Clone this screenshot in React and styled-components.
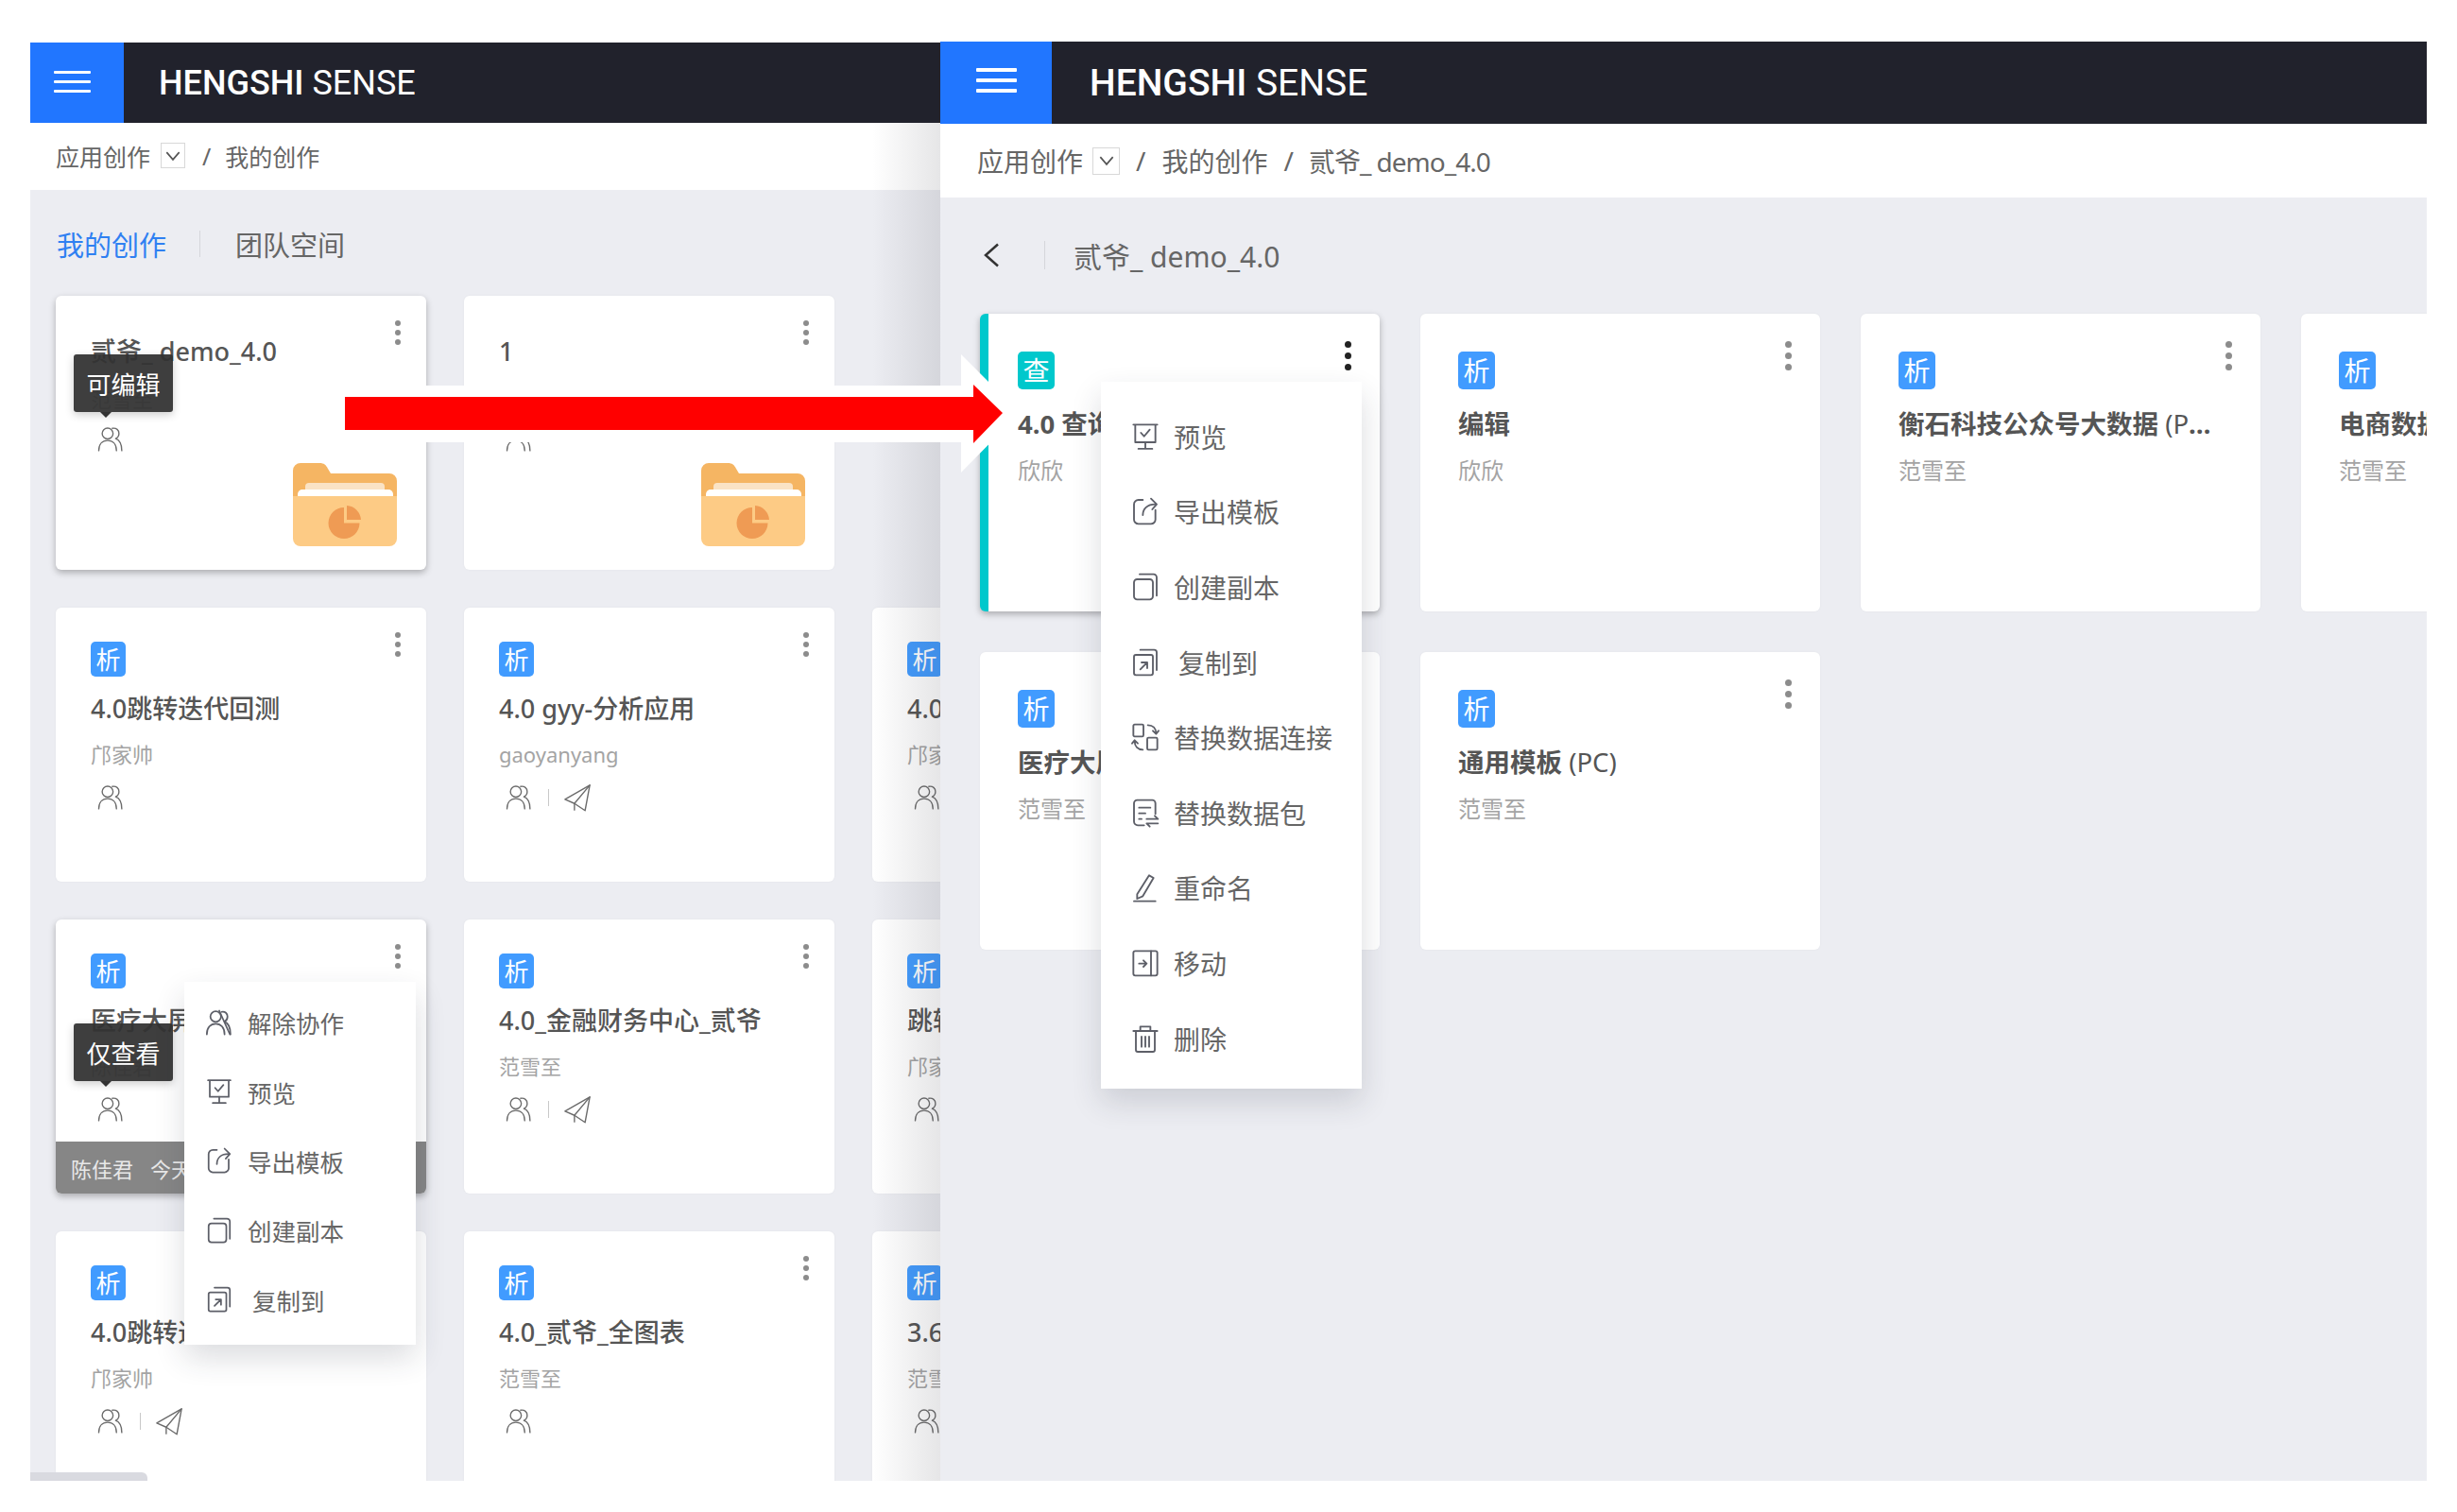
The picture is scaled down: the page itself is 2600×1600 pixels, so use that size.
import React from "react";
import styled, { createGlobalStyle } from "styled-components";

const GlobalStyle = createGlobalStyle`
  html, body { margin: 0; padding: 0; background: #fff; }
  * { box-sizing: border-box; }
  body { font-family: "Noto Sans", "Noto Sans CJK SC", sans-serif; color: #555; }
`;

const Stroke = ({ size = 26, color = "#5d5f68", sw = 1.4, children }) => (
  <svg width={size} height={size} viewBox="0 0 24 24" fill="none" stroke={color} strokeWidth={sw} strokeLinecap="round" strokeLinejoin="round">
    {children}
  </svg>
);

const icons = {
  users: (
    <>
      <circle cx="9.5" cy="7" r="4.6" />
      <path d="M2 21.5c0-5.5 3-8.6 7.5-8.6s7.5 3.1 7.5 8.6" />
      <path d="M13.5 2.6c3.4-.6 5.6 1.500 5.600 4.300 0 2-1 3.500-2.800 4.400 3.200 1.200 5.200 4.600 5.200 10.200" />
    </>
  ),
  unlink: (
    <>
      <circle cx="9" cy="7" r="4.500" />
      <path d="M1.500 22c0-5.500 3-9 7.500-9s7.500 3.500 7.500 9" />
      <path d="M14 3c3-.6 5 1.400 5 4 0 2-1 3.500-2.500 4.300 3 1.200 5 4.700 5 10.700" />
      <path d="M12 2l9 20" />
    </>
  ),
  preview: (
    <>
      <path d="M2.500 2.500h19M4 2.500v14h16v-14" />
      <path d="M8.500 9l2.500 2.800L15.500 6.500" />
      <path d="M12 16.500v5M6.500 21.700h11" />
    </>
  ),
  exportTpl: (
    <>
      <path d="M10 3H6.500A3.500 3.500 0 0 0 3 6.500v12A3.500 3.500 0 0 0 6.500 22h10a3.500 3.500 0 0 0 3.500-3.500V11" />
      <path d="M10 15c0-5 3.500-8.500 10-8.500" />
      <path d="M16.500 2l4.500 4.500-3.500 4" />
    </>
  ),
  copy: (
    <>
      <rect x="3" y="6" width="15" height="16" rx="2.500" />
      <path d="M7.500 2h11A2.500 2.500 0 0 1 21 4.500V19" />
    </>
  ),
  copyTo: (
    <>
      <rect x="3" y="6" width="15" height="16" rx="1.500" />
      <path d="M8 2h11a2 2 0 0 1 2 2v14" />
      <path d="M8 17.500l5-5M9 12h4.500v4.500" />
    </>
  ),
  swapLink: (
    <>
      <rect x="2.500" y="2" width="8" height="9.500" rx="1" />
      <rect x="13.500" y="12.500" width="8" height="9.500" rx="1" />
      <path d="M14 2.500c4 0 6.500 2.500 6.500 6.500M18 7l2.500 2.500L22.500 7" />
      <path d="M10 22c-4 0-6.500-2.500-6.500-7M1.500 17l2-2.500 2.500 2.500" />
    </>
  ),
  swapPack: (
    <>
      <path d="M11 22H6a3 3 0 0 1-3-3V4.500A2.500 2.500 0 0 1 5.500 2h12A2.500 2.500 0 0 1 20 4.500V13" />
      <path d="M7 8h9M7 12.500h5M7 17h2" />
      <path d="M13 17h9l-2.500-2.500M22 20.500h-9l2.500 2.500" />
    </>
  ),
  rename: (
    <>
      <path d="M5.500 17.500L15 2.500l3.500 2L10 19l-4.500 2z" />
      <path d="M3 23h17" />
    </>
  ),
  move: (
    <>
      <rect x="2.500" y="2.500" width="19" height="19.500" rx="1.500" />
      <path d="M16.500 2.500V22" />
      <path d="M7 12.500h5.500M10.500 10l2.500 2.500-2.500 2.500" />
    </>
  ),
  trash: (
    <>
      <path d="M2.500 6h19M8 6V2.500h8V6" />
      <path d="M4.500 6v15a1.500 1.500 0 0 0 1.500 1.500h12a1.500 1.500 0 0 0 1.500-1.500V6" />
      <path d="M9 10.500v8M12 10.500v8M15 10.500v8" />
    </>
  ),
  send: (
    <>
      <path d="M22.500 1.500L1.500 13.500l8 3.500 9 6z" />
      <path d="M22.500 1.500L9.500 17v5.500" />
    </>
  ),
};

const Folder = () => (
  <svg width="110" height="88" viewBox="0 0 110 88">
    <path d="M0 8a8 8 0 0 1 8-8h20c5 0 7 2 9 6l3 5h62a8 8 0 0 1 8 8v30H0z" fill="#f5b563" />
    <path d="M13 25a4 4 0 0 1 4-4h76a4 4 0 0 1 4 4v14H13z" fill="#fae3c5" />
    <path d="M5 33a5 5 0 0 1 5-5h91a5 5 0 0 1 5 5v8H5z" fill="#fff" />
    <path d="M0 35h110v45a8 8 0 0 1-8 8H8a8 8 0 0 1-8-8z" fill="#fdcb85" />
    <path d="M54 47a16.500 16.500 0 1 0 16.500 16.500H54z" fill="#ef9b54" />
    <path d="M57 45a16 16 0 0 1 15 15H57z" fill="#ef9b54" />
  </svg>
);

const Page = styled.div`
  position: relative;
  display: flex;
  width: 2600px;
  height: 1600px;
  padding: 45px 32px 33px;
  overflow: hidden;
  background: #fff;
`;

const Panel = styled.section`
  position: relative;
  flex: none;
  display: flex;
  flex-direction: column;
  overflow: hidden;
  background: #ecedf2;
  width: ${(p) => (p.$big ? "1573px" : "963px")};
  margin-top: ${(p) => (p.$big ? "-1px" : "0")};
  z-index: ${(p) => (p.$big ? 2 : 1)};
`;

const Shade = styled.div`
  position: absolute;
  top: 85px;
  right: 0;
  bottom: 0;
  width: 72px;
  z-index: 4;
  pointer-events: none;
  background: linear-gradient(to right, rgba(60, 60, 70, 0), rgba(60, 60, 70, 0.13));
`;

const TopBar = styled.header`
  flex: none;
  display: flex;
  align-items: center;
  background: #21222c;
  height: ${(p) => (p.$big ? "87px" : "85px")};
`;

const MenuButton = styled.div`
  flex: none;
  display: flex;
  flex-direction: column;
  justify-content: center;
  align-items: center;
  height: 100%;
  background: #2176ff;
  gap: ${(p) => (p.$big ? "7px" : "7px")};
  width: ${(p) => (p.$big ? "118px" : "99px")};
  padding-right: ${(p) => (p.$big ? "0" : "10px")};
  padding-bottom: ${(p) => (p.$big ? "6px" : "2px")};
`;

const MenuBar = styled.span`
  display: block;
  height: ${(p) => (p.$big ? "4px" : "3px")};
  border-radius: 1px;
  background: #fff;
  width: ${(p) => (p.$big ? "43px" : "39px")};
`;

const Brand = styled.div`
  font-family: Roboto, sans-serif;
  color: #fff;
  white-space: nowrap;
  font-size: ${(p) => (p.$big ? "39px" : "36px")};
  margin-left: ${(p) => (p.$big ? "40px" : "37px")};
  b { font-weight: 500; }
`;

const Crumbs = styled.nav`
  flex: none;
  display: flex;
  align-items: center;
  background: #fff;
  color: #666;
  white-space: nowrap;
  height: ${(p) => (p.$big ? "78px" : "71px")};
  padding-left: ${(p) => (p.$big ? "39px" : "27px")};
  padding-bottom: ${(p) => (p.$big ? "0" : "2px")};
  font-size: ${(p) => (p.$big ? "28px" : "25px")};
`;

const CrumbLast = styled.span`
  letter-spacing: -1px;
  margin-left: -1px;
`;

const DropBox = styled.span`
  display: inline-flex;
  align-items: center;
  justify-content: center;
  border: 1px solid #d8d8d8;
  margin-left: ${(p) => (p.$big ? "10px" : "11px")};
  width: ${(p) => (p.$big ? "29px" : "26px")};
  height: ${(p) => (p.$big ? "29px" : "27px")};
`;

const Slash = styled.span`
  margin: ${(p) => (p.$big ? "0 17px 0 17px" : "0 15px 0 18px")};
`;

const Content = styled.div`
  flex: 1;
  min-height: 0;
  padding: ${(p) => (p.$big ? "41px 0 0 42px" : "37px 0 0 27px")};
`;

const Tabs = styled.div`
  display: flex;
  align-items: center;
  height: 40px;
  font-size: 29px;
  color: #666;
  margin-bottom: 35px;
`;

const ActiveTab = styled.span`
  color: #2f80f2;
  margin-left: 1px;
`;

const TabLine = styled.span`
  width: 1px;
  height: 28px;
  background: #d5d6db;
  margin: 0 37px 0 35px;
`;

const BackRow = styled.div`
  display: flex;
  align-items: center;
  height: 40px;
  margin-bottom: 42px;
  font-size: 30px;
  color: #666;
  white-space: nowrap;
`;

const BackChevron = styled.svg`
  margin-left: 3px;
`;

const BackLine = styled.span`
  width: 1px;
  height: 30px;
  background: #d5d6db;
  margin: 0 30px 0 47px;
`;

const Grid = styled.div`
  display: grid;
  grid-template-columns: ${(p) => (p.$big ? "repeat(4, 423px)" : "repeat(3, 392px)")};
  grid-auto-rows: ${(p) => (p.$big ? "315px" : "290px")};
  gap: ${(p) => (p.$big ? "43px" : "40px")};
`;

const Card = styled.article`
  position: relative;
  display: flex;
  flex-direction: column;
  min-width: 0;
  border-radius: 6px;
  background: #fff;
  box-shadow: ${(p) => (p.$lifted ? "0 3px 7px rgba(0, 0, 0, 0.28)" : "0 0 3px rgba(0, 0, 0, 0.04)")};
  border-left: ${(p) => (p.$accent ? "9px solid #00c8cc" : "0")};
  padding: ${(p) => {
    if (p.$folder) return "42px 31px 0 37px";
    if (p.$big) return p.$accent ? "40px 50px 0 31px" : "40px 50px 0 40px";
    return "36px 31px 0 37px";
  }};
`;

const Dots = styled.div`
  position: absolute;
  display: flex;
  flex-direction: column;
  top: ${(p) => (p.$big ? "29px" : "26px")};
  right: ${(p) => (p.$big ? "30px" : "27px")};
  gap: ${(p) => (p.$big ? "5px" : "4px")};
  span {
    width: ${(p) => (p.$big ? "7px" : "6px")};
    height: ${(p) => (p.$big ? "7px" : "6px")};
    border-radius: 50%;
    background: ${(p) => (p.$dark ? "#222" : "#8c8c8c")};
  }
`;

const Badge = styled.div`
  flex: none;
  display: flex;
  align-items: center;
  justify-content: center;
  border-radius: 5px;
  color: #fff;
  background: ${(p) => (p.$teal ? "#00c8cc" : "#419bff")};
  width: ${(p) => (p.$big ? "39px" : "37px")};
  height: ${(p) => (p.$big ? "40px" : "37px")};
  font-size: ${(p) => (p.$big ? "28px" : "26px")};
  line-height: 1;
`;

const Title = styled.h3`
  margin: ${(p) => (p.$folder ? "-1px 0 0" : p.$big ? "19px 0 0" : "16px 0 0")};
  color: #555;
  overflow: hidden;
  white-space: nowrap;
  text-overflow: ellipsis;
  font-weight: ${(p) => (p.$big ? 700 : 500)};
  font-size: ${(p) => (p.$big ? "27.500px" : "27px")};
  line-height: 36px;
  span { font-weight: 400; }
`;

const Owner = styled.div`
  color: #a4a4a4;
  white-space: nowrap;
  line-height: 30px;
  font-size: ${(p) => (p.$big ? "24px" : "22px")};
  margin-top: ${(p) => (p.$big ? "16px" : p.$folder ? "17px" : "15px")};
`;

const Share = styled.div`
  display: flex;
  align-items: center;
  height: 24px;
  margin: ${(p) => (p.$folder ? "16px 0 0 6px" : "19px 0 0 6px")};
`;

const ShareLine = styled.span`
  width: 1px;
  height: 18px;
  background: #c8c8c8;
  margin: 0 15px 0 16px;
`;

const FolderSlot = styled.div`
  align-self: flex-end;
  margin-top: 13px;
  line-height: 0;
`;

const FootBar = styled.footer`
  position: absolute;
  left: 0;
  right: 0;
  bottom: 0;
  height: 55px;
  padding-left: 16px;
  display: flex;
  align-items: center;
  gap: 18px;
  color: #e8e8e8;
  font-size: 22px;
  background: #868686;
  border-radius: 0 0 6px 6px;
`;

const Tip = styled.div`
  position: absolute;
  left: 19px;
  top: ${(p) => p.$top}px;
  width: 105px;
  height: 61px;
  display: flex;
  align-items: center;
  justify-content: center;
  border-radius: 3px;
  color: #fff;
  font-size: 26px;
  background: rgba(50, 50, 50, 0.94);
  box-shadow: 0 3px 10px rgba(0, 0, 0, 0.2);
  &::after {
    content: "";
    position: absolute;
    left: 28px;
    bottom: -6px;
    border: 6px solid transparent;
    border-bottom: 0;
    border-top-color: #333;
  }
`;

const PopMenu = styled.ul`
  position: absolute;
  z-index: 3;
  margin: 0;
  list-style: none;
  background: #fff;
  box-shadow: 0 14px 30px rgba(40, 44, 60, 0.16);
  left: ${(p) => (p.$big ? "170px" : "163px")};
  top: ${(p) => (p.$big ? "360px" : "994px")};
  width: ${(p) => (p.$big ? "276px" : "245px")};
  padding: ${(p) => (p.$big ? "18px 0 14px 31px" : "6px 0 11px 22px")};
`;

const PopItem = styled.li`
  display: flex;
  align-items: center;
  color: #666;
  white-space: nowrap;
  height: ${(p) => (p.$big ? "79.600px" : "73.400px")};
  font-size: ${(p) => (p.$big ? "28px" : "25.500px")};
  gap: ${(p) => (p.$big ? "14px" : "15px")};
`;

const PopLabel = styled.span`
  margin-left: ${(p) => (p.$shift ? "5px" : "0")};
`;

const ScrollStub = styled.div`
  position: absolute;
  left: 0;
  bottom: 0;
  width: 124px;
  height: 9px;
  background: #d9dae0;
  border-radius: 0 6px 0 0;
`;

const Arrow = styled.svg`
  position: absolute;
  left: 345px;
  top: 370px;
  z-index: 5;
`;

const ThreeDots = ({ big, dark }) => (
  <Dots $big={big} $dark={dark}>
    <span />
    <span />
    <span />
  </Dots>
);

const Burger = ({ big }) => (
  <MenuButton $big={big}>
    <MenuBar $big={big} />
    <MenuBar $big={big} />
    <MenuBar $big={big} />
  </MenuButton>
);

const Chevron = ({ size = 20 }) => (
  <svg width={size} height={size} viewBox="0 0 18 18" fill="none" stroke="#555" strokeWidth="1.500">
    <path d="M3 5.500l6 7 6-7" />
  </svg>
);

const leftCards = [
  { title: "贰爷_ demo_4.0", owner: "范雪至", folder: true, lifted: true, tip: "可编辑", tipTop: 62 },
  { title: "1", owner: "", folder: true },
  null,
  { title: "4.0跳转迭代回测", owner: "邝家帅" },
  { title: "4.0 gyy-分析应用", owner: "gaoyanyang", send: true },
  { title: "4.0跳转", owner: "邝家帅" },
  { title: "医疗大屏", owner: "陈佳君", lifted: true, tip: "仅查看", tipTop: 110, foot: true },
  { title: "4.0_金融财务中心_贰爷", owner: "范雪至", send: true },
  { title: "跳转迭代", owner: "邝家帅" },
  { title: "4.0跳转迭代", owner: "邝家帅", send: true },
  { title: "4.0_贰爷_全图表", owner: "范雪至" },
  { title: "3.6跳转", owner: "范雪至" },
];

const rightCards = [
  { title: "4.0 查询", owner: "欣欣", teal: true, dark: true },
  { title: "编辑", owner: "欣欣" },
  { title: "衡石科技公众号大数据", suffix: " (PC端)", owner: "范雪至" },
  { title: "电商数据", owner: "范雪至" },
  { title: "医疗大屏", owner: "范雪至", noDots: true },
  { title: "通用模板", suffix: " (PC)", owner: "范雪至" },
];

const leftMenu = [
  ["unlink", "解除协作"],
  ["preview", "预览"],
  ["exportTpl", "导出模板"],
  ["copy", "创建副本"],
  ["copyTo", "复制到", true],
];

const rightMenu = [
  ["preview", "预览"],
  ["exportTpl", "导出模板"],
  ["copy", "创建副本"],
  ["copyTo", "复制到", true],
  ["swapLink", "替换数据连接"],
  ["swapPack", "替换数据包"],
  ["rename", "重命名"],
  ["move", "移动"],
  ["trash", "删除"],
];

const Menu = ({ items, big }) => (
  <PopMenu $big={big}>
    {items.map(([icon, label, shift]) => (
      <PopItem key={label} $big={big}>
        <Stroke size={big ? 32 : 30}>{icons[icon]}</Stroke>
        <PopLabel $shift={shift}>{label}</PopLabel>
      </PopItem>
    ))}
  </PopMenu>
);

const LeftCard = ({ c }) => (
  <Card $folder={c.folder} $lifted={c.lifted}>
    <ThreeDots />
    {!c.folder && <Badge>析</Badge>}
    <Title $folder={c.folder}>{c.title}</Title>
    <Owner $folder={c.folder}>{c.owner || "\u00a0"}</Owner>
    <Share $folder={c.folder}>
      <Stroke size={30} color="#6b6b6b" sw={1.1}>{icons.users}</Stroke>
      {c.send && <ShareLine />}
      {c.send && <Stroke size={30} color="#6b6b6b" sw={1.1}>{icons.send}</Stroke>}
    </Share>
    {c.folder && (
      <FolderSlot>
        <Folder />
      </FolderSlot>
    )}
    {c.foot && (
      <FootBar>
        <span>陈佳君</span>
        <span>今天</span>
      </FootBar>
    )}
    {c.tip && <Tip $top={c.tipTop}>{c.tip}</Tip>}
  </Card>
);

const RightCard = ({ c }) => (
  <Card $big $accent={c.teal} $lifted={c.teal}>
    {!c.noDots && <ThreeDots big dark={c.dark} />}
    <Badge $big $teal={c.teal}>{c.teal ? "查" : "析"}</Badge>
    <Title $big>
      {c.title}
      {c.suffix && <span>{c.suffix}</span>}
    </Title>
    <Owner $big>{c.owner}</Owner>
  </Card>
);

export default function App() {
  return (
    <Page>
      <GlobalStyle />
      <Panel>
        <TopBar>
          <Burger />
          <Brand><b>HENGSHI</b> SENSE</Brand>
        </TopBar>
        <Crumbs>
          应用创作
          <DropBox><Chevron /></DropBox>
          <Slash>/</Slash>
          我的创作
        </Crumbs>
        <Content>
          <Tabs>
            <ActiveTab>我的创作</ActiveTab>
            <TabLine />
            团队空间
          </Tabs>
          <Grid>
            {leftCards.map((c, i) => (c ? <LeftCard key={i} c={c} /> : <span key={i} />))}
          </Grid>
        </Content>
        <Menu items={leftMenu} />
        <ScrollStub />
        <Shade />
      </Panel>

      <Panel $big>
        <TopBar $big>
          <Burger big />
          <Brand $big><b>HENGSHI</b> SENSE</Brand>
        </TopBar>
        <Crumbs $big>
          应用创作
          <DropBox $big><Chevron /></DropBox>
          <Slash $big>/</Slash>
          我的创作
          <Slash $big>/</Slash>
          <CrumbLast>贰爷_ demo_4.0</CrumbLast>
        </Crumbs>
        <Content $big>
          <BackRow>
            <BackChevron width="18" height="26" viewBox="0 0 18 26" fill="none" stroke="#333" strokeWidth="2.500">
              <path d="M16 1.500L3 13l13 11.500" />
            </BackChevron>
            <BackLine />
            贰爷_ demo_4.0
          </BackRow>
          <Grid $big>
            {rightCards.map((c) => (
              <RightCard key={c.title} c={c} />
            ))}
          </Grid>
        </Content>
        <Menu items={rightMenu} big />
      </Panel>

      <Arrow width="740" height="135" viewBox="0 0 740 135">
        <polygon points="0,38 672,38 672,5 734,67 672,130 672,98 0,98" fill="#fff" />
        <polygon points="20,50 685,50 685,37 716,67 685,99 685,85 20,85" fill="#f00" />
      </Arrow>
    </Page>
  );
}
